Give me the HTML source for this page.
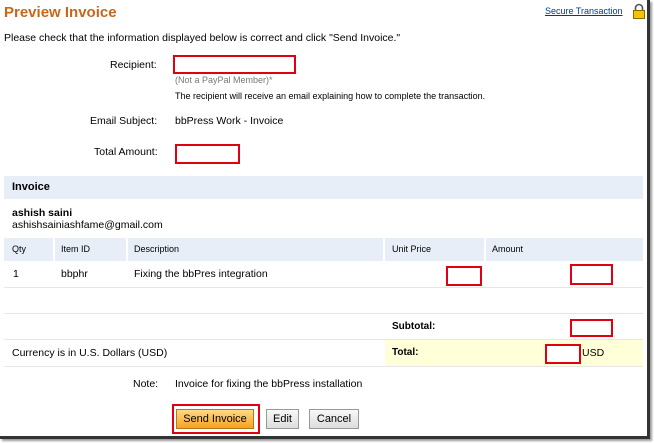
<!DOCTYPE html>
<html><head><style>
*{margin:0;padding:0;box-sizing:border-box}
body{width:654px;height:443px;background:#fff;font-family:"Liberation Sans",Arial,sans-serif;font-size:10.5px;color:#000;position:relative;overflow:hidden}
.a{position:absolute;white-space:nowrap}
.red{position:absolute;border:2px solid #e0000f;background:#fff}
.frame{position:absolute;left:0;top:0;width:650px;height:439px;border-right:3px solid #333;border-bottom:3px solid #333;box-shadow:2px 2px 2px #999}
.lb{position:absolute;background:#e7eef8}
.hl{position:absolute;height:1px;background:#e6e6e6;left:4px;width:639px}
.btn{position:absolute;height:20px;border:1px solid #999;background:linear-gradient(#f8f8f8,#ddd);font-size:11px;text-align:center;line-height:18px}
.sep{position:absolute;top:238px;width:2px;height:23px;background:#fff}
</style></head><body>
<div class="frame"></div>
<div class="a" style="left:4px;top:4px;font-size:15px;font-weight:bold;color:#c8661c">Preview Invoice</div>
<div class="a" style="left:545px;top:6px;font-size:9px;color:#003c8e;text-decoration:underline">Secure Transaction</div>
<svg class="a" style="left:632px;top:3px" width="14" height="16" viewBox="0 0 14 16"><path d="M3.5 8V5a3.5 3.5 0 0 1 7 0v3" fill="none" stroke="#555" stroke-width="1.6"/><rect x="1.5" y="7.5" width="11" height="8" fill="#f5c400" stroke="#8a6a00"/></svg>
<div class="a" style="left:4px;top:32px">Please check that the information displayed below is correct and click "Send Invoice."</div>
<div class="a" style="left:110px;top:59px">Recipient:</div>
<div class="red" style="left:173px;top:55px;width:123px;height:19px"></div>
<div class="a" style="left:175px;top:75px;font-size:9px;color:#777">(Not a PayPal Member)*</div>
<div class="a" style="left:175px;top:91px;font-size:9px">The recipient will receive an email explaining how to complete the transaction.</div>
<div class="a" style="left:90px;top:115px">Email Subject:</div>
<div class="a" style="left:175px;top:115px">bbPress Work - Invoice</div>
<div class="a" style="left:94px;top:146px">Total Amount:</div>
<div class="red" style="left:175px;top:144px;width:65px;height:20px"></div>

<div class="lb" style="left:4px;top:176px;width:639px;height:23px"></div>
<div class="a" style="left:12px;top:181px;font-weight:bold;font-size:11px">Invoice</div>
<div class="a" style="left:12px;top:207px;font-weight:bold">ashish saini</div>
<div class="a" style="left:12px;top:219px">ashishsainiashfame@gmail.com</div>
<div class="lb" style="left:4px;top:238px;width:639px;height:23px"></div>
<div class="sep" style="left:53px"></div>
<div class="sep" style="left:126px"></div>
<div class="sep" style="left:383px"></div>
<div class="sep" style="left:484px"></div>
<div class="a" style="left:12px;top:244px;font-size:9px">Qty</div>
<div class="a" style="left:61px;top:244px;font-size:9px">Item ID</div>
<div class="a" style="left:134px;top:244px;font-size:9px">Description</div>
<div class="a" style="left:392px;top:244px;font-size:9px">Unit Price</div>
<div class="a" style="left:492px;top:244px;font-size:9px">Amount</div>
<div class="a" style="left:13px;top:268px">1</div>
<div class="a" style="left:61px;top:268px">bbphr</div>
<div class="a" style="left:134px;top:268px">Fixing the bbPres integration</div>
<div class="red" style="left:446px;top:266px;width:36px;height:20px"></div>
<div class="red" style="left:570px;top:264px;width:43px;height:21px"></div>
<div class="hl" style="top:287px"></div>
<div class="hl" style="top:313px"></div>
<div class="a" style="left:392px;top:321px;font-weight:bold;font-size:10px">Subtotal:</div>
<div class="red" style="left:570px;top:319px;width:43px;height:18px"></div>
<div class="hl" style="top:339px"></div>
<div style="position:absolute;left:385px;top:340px;width:258px;height:26px;background:#ffffd8"></div>
<div class="a" style="left:12px;top:347px">Currency is in U.S. Dollars (USD)</div>
<div class="a" style="left:392px;top:347px;font-weight:bold;font-size:10px">Total:</div>
<div class="red" style="left:545px;top:344px;width:36px;height:20px"></div>
<div class="a" style="left:582px;top:347px">USD</div>
<div class="hl" style="top:366px"></div>
<div class="a" style="left:133px;top:378px">Note:</div>
<div class="a" style="left:175px;top:378px">Invoice for fixing the bbPress installation</div>
<div class="red" style="left:172px;top:404px;width:88px;height:30px;background:none"></div>
<div class="btn" style="left:176px;top:409px;width:78px;background:linear-gradient(#ffd98a,#f7a21b);border-color:#b07a20">Send Invoice</div>
<div class="btn" style="left:266px;top:409px;width:33px">Edit</div>
<div class="btn" style="left:309px;top:409px;width:50px">Cancel</div>
</body></html>
